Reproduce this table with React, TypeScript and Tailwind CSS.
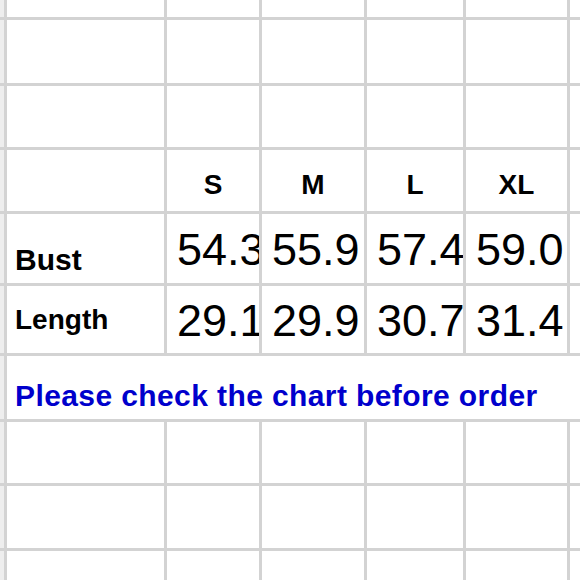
const sizes = ["S", "M", "L", "XL"];

const rows = [
  { label: "Bust", values: ["54.3", "55.9", "57.4", "59.0"], labelCls: "text-[30px] pb-[8px]", valuePad: "pb-[11px]" },
  { label: "Length", values: ["29.1", "29.9", "30.7", "31.4"], labelCls: "text-[28px] pb-[19px]", valuePad: "pb-[10px]" },
];

function Blank({ count }: { count: number }) {
  return (
    <>
      <div className="bg-[#eeeeee]" />
      {Array.from({ length: count }).map((_, i) => (
        <div key={i} className="bg-white" />
      ))}
    </>
  );
}

export default function App() {
  return (
    <div
      className="w-[580px] h-[580px] overflow-hidden bg-[#d3d3d3] grid gap-[3px] grid-cols-[4px_157px_92px_102px_96px_101px_10px] grid-rows-[17px_63px_61px_61px_69px_67px_63px_61px_62px_29px] text-black"
      style={{ fontFamily: '"Liberation Sans", Arial, sans-serif' }}
    >
      {/* empty rows on top */}
      <Blank count={6} />
      <Blank count={6} />
      <Blank count={6} />

      {/* size header */}
      <div className="bg-[#eeeeee]" />
      <div className="bg-white" />
      {sizes.map((s) => (
        <div key={s} className="bg-white flex items-end justify-center pb-[12px]">
          <span className="text-[28px] font-bold leading-none">{s}</span>
        </div>
      ))}
      <div className="bg-white" />

      {/* measurement rows */}
      {rows.map((r) => (
        <div key={r.label} className="contents">
          <div className="bg-[#eeeeee]" />
          <div className={`bg-white flex items-end pl-[8px] ${r.labelCls}`}>
            <span className="font-bold leading-none">{r.label}</span>
          </div>
          {r.values.map((v, i) => (
            <div key={i} className={`bg-white overflow-hidden flex items-end pl-[10px] ${r.valuePad}`}>
              <span className="text-[45px] leading-none whitespace-nowrap">{v}</span>
            </div>
          ))}
          <div className="bg-white" />
        </div>
      ))}

      {/* note, merged across the sheet */}
      <div className="bg-[#eeeeee]" />
      <div className="col-span-6 bg-white flex items-end pl-[8px] pb-[8px]">
        <span className="text-[30px] font-bold leading-none text-[#0000cc] whitespace-nowrap tracking-[0.4px]">
          Please check the chart before order
        </span>
      </div>

      {/* empty rows below */}
      <Blank count={6} />
      <Blank count={6} />
      <Blank count={6} />
    </div>
  );
}
